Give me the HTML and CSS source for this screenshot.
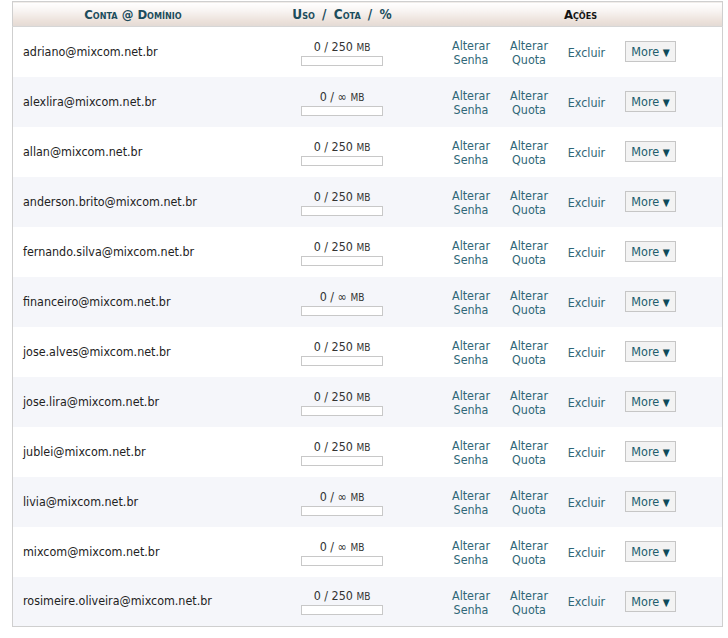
FILE: index.html
```html
<!DOCTYPE html>
<html lang="pt-BR">
<head>
<meta charset="utf-8">
<title>Contas de e-mail</title>
<link rel="stylesheet" href="styles.css">
</head>
<body>
<table class="list">
  <thead>
    <tr>
      <th class="c-acc">Conta @ Domínio</th>
      <th class="c-use"><span class="wide">Uso / Cota / %</span></th>
      <th class="c-act"><span class="dark">Ações</span></th>
    </tr>
  </thead>
  <tbody id="rows"></tbody>
</table>
<script src="app.js"></script>
</body>
</html>
```

FILE: app.js
```js
const data = [
  ["adriano@mixcom.net.br", "250"],
  ["alexlira@mixcom.net.br", "∞"],
  ["allan@mixcom.net.br", "250"],
  ["anderson.brito@mixcom.net.br", "250"],
  ["fernando.silva@mixcom.net.br", "250"],
  ["financeiro@mixcom.net.br", "∞"],
  ["jose.alves@mixcom.net.br", "250"],
  ["jose.lira@mixcom.net.br", "250"],
  ["jublei@mixcom.net.br", "250"],
  ["livia@mixcom.net.br", "∞"],
  ["mixcom@mixcom.net.br", "∞"],
  ["rosimeire.oliveira@mixcom.net.br", "250"]
];
const tb = document.getElementById("rows");
tb.innerHTML = data.map(([mail, q]) => `
<tr>
  <td class="c-acc">${mail}</td>
  <td class="c-use">
    <div class="usage">0 / ${q} <span class="unit">MB</span></div>
    <div class="bar"></div>
  </td>
  <td class="c-act">
    <div class="actions">
      <a class="act">Alterar<br>Senha</a>
      <a class="act">Alterar<br>Quota</a>
      <a class="act single">Excluir</a>
      <span class="more">More <span class="tri">▼</span></span>
    </div>
  </td>
</tr>`).join("");
```

FILE: styles.css
```css
html, body {
  margin: 0;
  padding: 0;
  background: #fff;
}
body {
  padding: 1px 0 0 12px;
  font-family: "DejaVu Sans Condensed", "DejaVu Sans", sans-serif;
  font-size: 12.4px;
  color: #222;
}
.list {
  width: 711px;
  border: 1px solid #cfcfcf;
  border-collapse: collapse;
  table-layout: fixed;
}
.list th {
  height: 24px;
  padding: 0;
  background: linear-gradient(#ffffff 0%, #f8f4f2 35%, #ebe0d9 80%, #e2dad5 100%);
  border-bottom: 1px solid #d6d6d6;
  font-variant: small-caps;
  font-weight: bold;
  font-size: 13px;
  color: #1c4d5d;
  text-align: center;
  vertical-align: middle;
}
.list th .dark { color: #141414; }
.list th .wide { word-spacing: 3px; font-size: 13.5px; }
.list th.c-act { padding-left: 8px; }
.c-acc { width: 240px; }
.c-use { width: 178px; }
.list td {
  height: 50px;
  padding: 0;
  vertical-align: middle;
  box-sizing: border-box;
}
.list tbody tr:nth-child(even) td { background: #f5f6fa; }
.list td.c-acc {
  padding-left: 10px;
  line-height: 16px;
  color: #222;
}
.list td.c-use { text-align: center; }
.usage {
  color: #333;
  line-height: 17px;
}
.unit {
  font-size: 10px;
}
.bar {
  width: 80px;
  height: 8px;
  margin: 0 auto;
  border: 1px solid #c8c8c8;
  background: #fff;
}
.actions {
  display: flex;
  align-items: center;
  padding-left: 11px;
  height: 34px;
}
.act {
  width: 58px;
  text-align: center;
  color: #2f6777;
  line-height: 14px;
  cursor: pointer;
  margin-top: 3px;
}
.act.single { width: 57px; margin-top: 2px; }
.more {
  margin-left: 10px;
  width: 49px;
  height: 19px;
  line-height: 19px;
  text-align: center;
  border: 1px solid #c6c6c6;
  background: #f3f3f3;
  color: #215d6d;
  font-size: 12.5px;
}
.tri {
  font-size: 10px;
  color: #0e4a5a;
}
```
